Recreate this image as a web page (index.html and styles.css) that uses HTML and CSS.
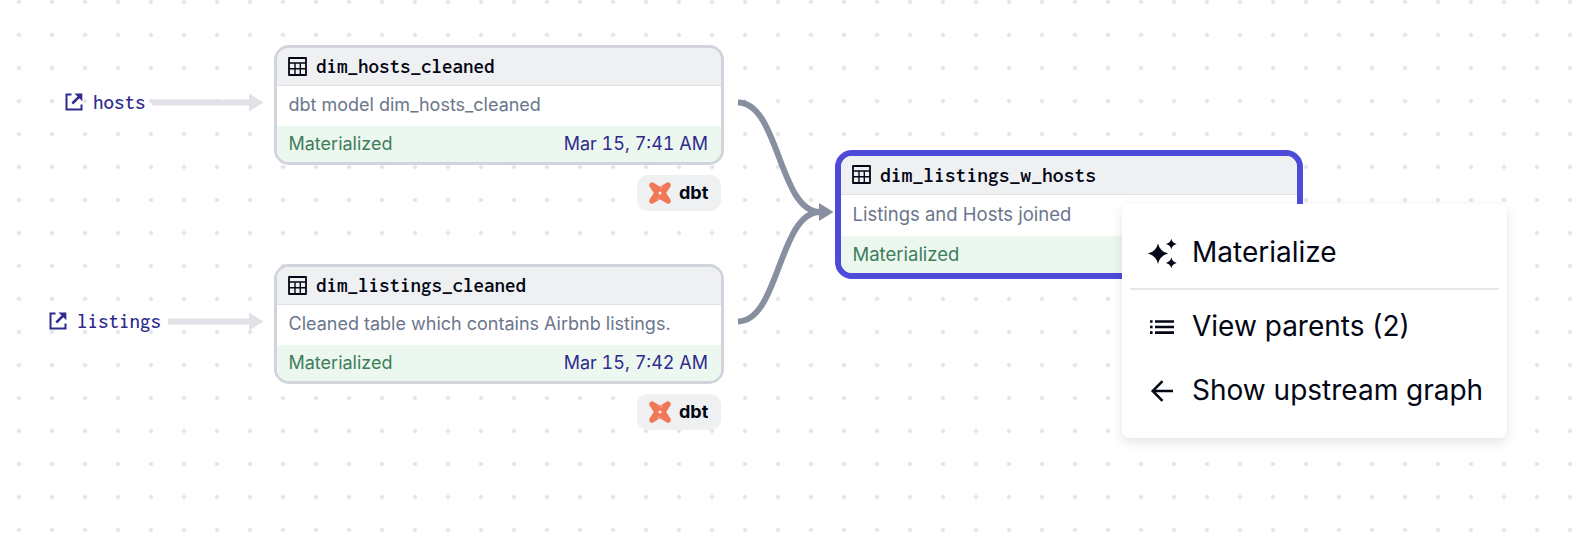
FILE: index.html
```html
<!DOCTYPE html>
<html lang="en">
<head>
<meta charset="utf-8">
<title>Asset graph</title>
<link rel="stylesheet" href="styles.css">
</head>
<body>
<svg width="0" height="0" class="defs">
  <symbol id="table" viewBox="0 0 19 19"><path fill="none" stroke="currentColor" stroke-width="1.8" stroke-linejoin="round" d="M1 1h17v17H1z"/><path fill="none" stroke="currentColor" stroke-width="1.4" d="M1 6h17M1 11.8h17M7 6v12M12.300 6v12"/></symbol>
  <symbol id="external" viewBox="0 0 18 18"><path fill="none" stroke="currentColor" stroke-width="2" d="M6.500 1.500H1.500v15h15v-5"/><path fill="none" stroke="currentColor" stroke-width="2.500" d="M7.300 10.500 15 2.800"/><path fill="currentColor" d="M9.500.5h7.800v7.800z"/></symbol>
  <symbol id="dbt" viewBox="0 0 22 22"><path fill="#f07856" fill-rule="evenodd" d="M3.200.2C1.500.2.200 1.500.2 3.200c0 .7.300 1.200.7 1.900L4.800 11 .9 17c-.4.7-.7 1.200-.7 1.900 0 1.600 1.300 2.900 2.900 2.900.7 0 1.200-.3 1.900-.7L11 17.300l6 3.800c.7.4 1.200.7 1.900.7 1.600 0 2.900-1.300 2.900-2.900 0-.7-.3-1.200-.7-1.900L17.200 11l3.900-5.900c.4-.7.7-1.200.7-1.900 0-1.700-1.300-3-3-3-.7 0-1.200.3-1.800.7L11 4.700 5 .9C4.400.5 3.900.2 3.200.2zM11 9.500a1.500 1.500 0 1 1 0 3 1.500 1.500 0 0 1 0-3z"/><path stroke="#eff0f2" stroke-width=".7" d="m12 6.500 1.500-2M10 15.500l-1.500 2"/></symbol>
</svg>
<main class="canvas">
  <svg class="edges" width="1594" height="546">
    <g fill="none" stroke="#e1e2e8" stroke-width="6"><path d="M152 102.500H250M168 321.500H250"/></g>
    <path fill="#e1e2e8" d="m249 93.500 14.500 9-14.500 9zM249 312.500l14.500 9-14.500 9z"/>
    <g fill="none" stroke="#878fa0" stroke-width="6"><path d="M738 102.500C779 102.500 779 212 820 212M738 321.500C779 321.500 779 212 820 212"/></g>
    <path fill="#878fa0" d="m819 203 14.500 9-14.500 9z"/>
  </svg>

  <div class="source source-hosts"><svg class="source-icon"><use href="#external"/></svg><span class="mono">hosts</span></div>
  <div class="source source-listings"><svg class="source-icon"><use href="#external"/></svg><span class="mono">listings</span></div>

  <section class="asset asset-hosts">
    <div class="card">
      <header class="head"><svg class="table-icon"><use href="#table"/></svg><span class="mono name">dim_hosts_cleaned</span></header>
      <div class="desc"><span>dbt model dim_hosts_cleaned</span></div>
      <footer class="status"><span>Materialized</span><span class="date">Mar 15, 7:41 AM</span></footer>
    </div>
    <div class="badge"><svg class="dbt-icon"><use href="#dbt"/></svg><span>dbt</span></div>
  </section>

  <section class="asset asset-listings">
    <div class="card">
      <header class="head"><svg class="table-icon"><use href="#table"/></svg><span class="mono name">dim_listings_cleaned</span></header>
      <div class="desc"><span>Cleaned table which contains Airbnb listings.</span></div>
      <footer class="status"><span>Materialized</span><span class="date">Mar 15, 7:42 AM</span></footer>
    </div>
    <div class="badge"><svg class="dbt-icon"><use href="#dbt"/></svg><span>dbt</span></div>
  </section>

  <section class="asset asset-joined">
    <div class="card selected">
      <header class="head"><svg class="table-icon"><use href="#table"/></svg><span class="mono name">dim_listings_w_hosts</span></header>
      <div class="desc"><span>Listings and Hosts joined</span></div>
      <footer class="status"><span>Materialized</span></footer>
    </div>
  </section>

  <nav class="menu">
    <div class="item first"><svg class="menu-icon" viewBox="0 0 32 32"><path fill="currentColor" d="M12 7.500Q14 16 22.200 17.500 14 19.500 12 28 10 19.500 1.800 17.500 10 16 12 7.500zM25.300 2.700Q26.300 7 30.700 8 26.300 9 25.300 13.300 24.300 9 19.900 8 24.300 7 25.300 2.700zM25.300 21.600Q26.300 25.900 30.700 26.900 26.300 27.900 25.300 32.200 24.300 27.900 19.900 26.900 24.300 25.900 25.300 21.600z"/></svg><span>Materialize</span></div>
    <div class="divider"></div>
    <div class="item"><svg class="menu-icon" viewBox="0 0 32 32"><path stroke="currentColor" stroke-width="2.600" d="M4 11.500h2.600M4 17h2.600M4 22.600h2.600M9 11.500h19M9 17h19M9 22.600h19"/></svg><span>View parents (2)</span></div>
    <div class="item"><svg class="menu-icon" viewBox="0 0 32 32"><path fill="none" stroke="currentColor" stroke-width="2.500" d="M27 17H7M16.500 7.200 6.700 17l9.800 9.800"/></svg><span>Show upstream graph</span></div>
  </nav>
</main>
</body>
</html>
```

FILE: styles.css
```css
* { box-sizing: border-box; }
body { margin: 0; font-family: Inter, "Liberation Sans", sans-serif; color: #030615; }
svg { display: block; flex: none; overflow: visible; }
.defs { position: absolute; }
.canvas {
  position: relative; width: 1594px; height: 546px; overflow: hidden;
  background-color: #fff;
  background-image: radial-gradient(circle at 50% 50%, #e1e2e8 1.800px, transparent 2.400px);
  background-size: 33px 33px; background-position: 2.500px -14.500px;
}
.edges { position: absolute; left: 0; top: 0; }
.mono { font-family: Inconsolata, "Liberation Mono", monospace; font-size: 21px; line-height: 24px; white-space: pre; }
.source { position: absolute; display: flex; align-items: center; gap: 10px; height: 24px; color: #2f2b8d; }
.source .mono { font-weight: 500; }
.source-icon { width: 18px; height: 18px; }
.source-hosts { left: 65px; top: 90px; }
.source-listings { left: 49px; top: 309px; }
.asset { position: absolute; display: flex; flex-direction: column; align-items: flex-end; gap: 10px; }
.asset-hosts { left: 274px; top: 45px; }
.asset-listings { left: 274px; top: 264px; }
.asset-joined { left: 835px; top: 150px; }
.card { width: 450px; height: 120px; border: 3px solid #d2d4dd; border-radius: 15px; background: #fff; overflow: hidden; font-size: 18px; }
.head { display: flex; align-items: center; gap: 9px; height: 38px; padding: 0 0 1px 11px; background: #eff0f2; border-bottom: 1px solid #e1e2e6; }
.table-icon { width: 19px; height: 19px; }
.name { font-weight: 600; }
.desc { display: flex; align-items: center; height: 40px; padding: 0 12px 3px 11.500px; color: #6b768c; }
.status { display: flex; align-items: center; justify-content: space-between; height: 36px; padding: 0 13px 2px 11.500px; background: #ecf7ef; color: #3e7e59; }
.date { color: #2f2b8d; font-variant-numeric: tabular-nums; }
.selected { width: 468px; height: 129px; border: 6px solid #4f4bd9; border-radius: 17px; font-size: 18.500px; }
.selected .head { height: 39px; }
.selected .name { font-size: 21.600px; }
.selected .desc { height: 41px; padding-bottom: 4px; }
.selected .status { height: 37px; padding-bottom: 2px; }
.badge { display: flex; align-items: center; gap: 8px; width: 84px; height: 36px; margin-right: 3px; padding: 0 0 1px 12px; border-radius: 11px; background: #eff0f2; font-size: 18px; font-weight: 700; }
.dbt-icon { width: 22px; height: 22px; }
.menu { position: absolute; left: 1122px; top: 204px; width: 385px; height: 234px; padding: 16px 8px; border-radius: 7px; background: #fff; box-shadow: 0 4px 12px rgba(0, 0, 0, .11); font-size: 28px; }
.item { display: flex; align-items: center; gap: 14px; height: 64px; padding: 0 0 2px 16px; white-space: nowrap; }
.item.first { height: 60px; margin-bottom: 8px; padding: 4px 0 0 16px; }
.menu-icon { width: 32px; height: 32px; }
.divider { height: 2px; margin-bottom: 5px; background: #e6e7ed; }
```
